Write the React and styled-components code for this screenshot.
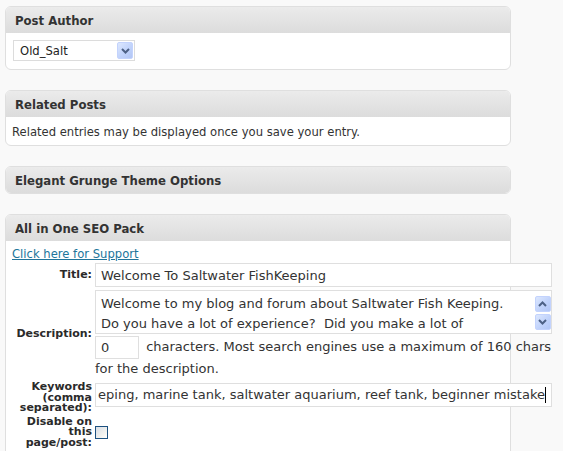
import React from "react";
import styled, { createGlobalStyle } from "styled-components";

const GlobalStyle = createGlobalStyle`
  html, body {
    margin: 0;
    padding: 0;
    background: #f9f9f9;
  }
  body {
    font-family: "DejaVu Sans", Verdana, sans-serif;
    color: #333;
  }
`;

const Page = styled.div`
  padding: 6px 0 0 5px;
  width: 506px;
`;

const Box = styled.section`
  border: 1px solid #dfdfdf;
  border-radius: 6px;
  background: #fff;
  margin-bottom: 20px;
`;

const BoxHeader = styled.h3`
  margin: 0;
  height: 26px;
  display: flex;
  align-items: center;
  padding-left: 9px;
  font-family: "DejaVu Sans Condensed", "Liberation Sans", sans-serif;
  font-weight: bold;
  font-size: 13px;
  color: #333;
  background: linear-gradient(#ebebeb, #dcdcdc);
  border-radius: ${(p) => (p.$closed ? "5px" : "5px 5px 0 0")};
`;

const BoxBody = styled.div`
  padding: ${(p) => p.$pad || "7px"};
  font-size: 11.6px;
  line-height: 14px;
`;

/* ---- author dropdown ---- */
const Select = styled.div`
  display: flex;
  align-items: center;
  justify-content: space-between;
  box-sizing: border-box;
  width: 122px;
  height: 21px;
  border: 1px solid #dcdcdc;
  padding: 0 1px 0 6px;
  font-size: 11.6px;
  color: #222;
  background: #fff;
`;

const XpButton = styled.span`
  display: flex;
  align-items: center;
  justify-content: center;
  box-sizing: border-box;
  width: ${(p) => p.$w || 16}px;
  height: ${(p) => p.$h || 16}px;
  border: 1px solid #c3d3fd;
  border-radius: 2px;
  background: linear-gradient(135deg, #dce7fe 0%, #c1d3fb 55%, #b2c6f5 100%);
`;

const Chevron = ({ up }) => (
  <svg width="9" height="6" viewBox="0 0 9 6">
    <path
      d={up ? "M1 5 L4.5 1.5 L8 5" : "M1 1 L4.5 4.5 L8 1"}
      fill="none"
      stroke="#4d6185"
      strokeWidth="2"
    />
  </svg>
);

/* ---- SEO form ---- */
const SupportLink = styled.a`
  display: block;
  color: #21759b;
  text-decoration: underline;
  font-size: 11.6px;
  line-height: 16px;
`;

const FormGrid = styled.div`
  display: grid;
  grid-template-columns: 80px 464px;
  column-gap: 3px;
  row-gap: 3px;
  align-items: center;
  margin-top: 1px;
`;

const Label = styled.label`
  text-align: right;
  font-family: "DejaVu Sans", sans-serif;
  font-weight: bold;
  font-size: 11px;
  line-height: 10.5px;
  color: #2a2a2a;
`;

const fieldBase = `
  box-sizing: border-box;
  border: 1px solid #dfdfdf;
  background: #fff;
  font-family: "DejaVu Sans", Verdana, sans-serif;
  font-size: 13px;
  color: #333;
  outline: none;
  margin: 0;
`;

const TextInput = styled.input`
  ${fieldBase}
  display: block;
  width: ${(p) => p.$w || 457}px;
  height: ${(p) => p.$h || 24}px;
  padding: 0 5px;
`;

const AreaFrame = styled.div`
  ${fieldBase}
  display: flex;
  width: 457px;
  height: 44px;
`;

const Area = styled.textarea`
  flex: 1;
  border: none;
  outline: none;
  resize: none;
  overflow: hidden;
  padding: 3px 5px;
  margin: 0;
  font-family: "DejaVu Sans", Verdana, sans-serif;
  font-size: 13px;
  line-height: 20px;
  color: #333;
  white-space: pre-wrap;
`;

const ScrollBar = styled.div`
  width: 17px;
  display: flex;
  flex-direction: column;
  align-items: center;
  gap: 2px;
  padding-top: 5px;
`;

const DescCell = styled.div`
  display: flex;
  flex-direction: column;
  gap: 2px;
`;

const CounterLine = styled.div`
  font-size: 13px;
  line-height: 20px;
  color: #333;

  input {
    display: inline-block;
    vertical-align: middle;
    margin-right: 3px;
  }
`;

const KeywordField = styled.div`
  ${fieldBase}
  display: flex;
  align-items: center;
  justify-content: flex-end;
  align-self: start;
  margin-top: 1px;
  width: 457px;
  height: 24px;
  padding: 0 5px;
  overflow: hidden;
  white-space: nowrap;
`;

const Caret = styled.span`
  flex: none;
  width: 1px;
  height: 16px;
  background: #000;
`;

const CheckBox = styled.input.attrs({ type: "checkbox" })`
  appearance: none;
  display: block;
  width: 13px;
  height: 13px;
  margin: 0;
  border: 1px solid #1c5180;
  background: linear-gradient(135deg, #d8dee6 0%, #f4f4f0 70%, #ffffff 100%);
`;

const description =
  "Welcome to my blog and forum about Saltwater Fish Keeping.\nDo you have a lot of experience?  Did you make a lot of\nmistakes when you first started?";

export default function App() {
  return (
    <>
      <GlobalStyle />
      <Page>
        <Box>
          <BoxHeader>Post Author</BoxHeader>
          <BoxBody $pad="7px 7px 8px">
            <Select>
              <span>Old_Salt</span>
              <XpButton $w={16} $h={17}>
                <Chevron />
              </XpButton>
            </Select>
          </BoxBody>
        </Box>

        <Box>
          <BoxHeader>Related Posts</BoxHeader>
          <BoxBody $pad="8px 6px 6px">
            Related entries may be displayed once you save your entry.
          </BoxBody>
        </Box>

        <Box>
          <BoxHeader $closed>Elegant Grunge Theme Options</BoxHeader>
        </Box>

        <Box>
          <BoxHeader>All in One SEO Pack</BoxHeader>
          <BoxBody $pad="5px 6px 40px">
            <SupportLink href="#">Click here for Support</SupportLink>
            <FormGrid>
              <Label>Title:</Label>
              <TextInput defaultValue="Welcome To Saltwater FishKeeping" />

              <Label>Description:</Label>
              <DescCell>
                <AreaFrame>
                  <Area rows={2} defaultValue={description} />
                  <ScrollBar>
                    <XpButton>
                      <Chevron up />
                    </XpButton>
                    <XpButton>
                      <Chevron />
                    </XpButton>
                  </ScrollBar>
                </AreaFrame>
                <CounterLine>
                  <TextInput $w={44} $h={23} defaultValue="0" /> characters.
                  Most search engines use a maximum of 160 chars for the
                  description.
                </CounterLine>
              </DescCell>

              <Label>Keywords (comma separated):</Label>
              <KeywordField>
                <span>eping, marine tank, saltwater aquarium, reef tank, beginner mistake</span>
                <Caret />
              </KeywordField>

              <Label>Disable on this page/post:</Label>
              <CheckBox />
            </FormGrid>
          </BoxBody>
        </Box>
      </Page>
    </>
  );
}
